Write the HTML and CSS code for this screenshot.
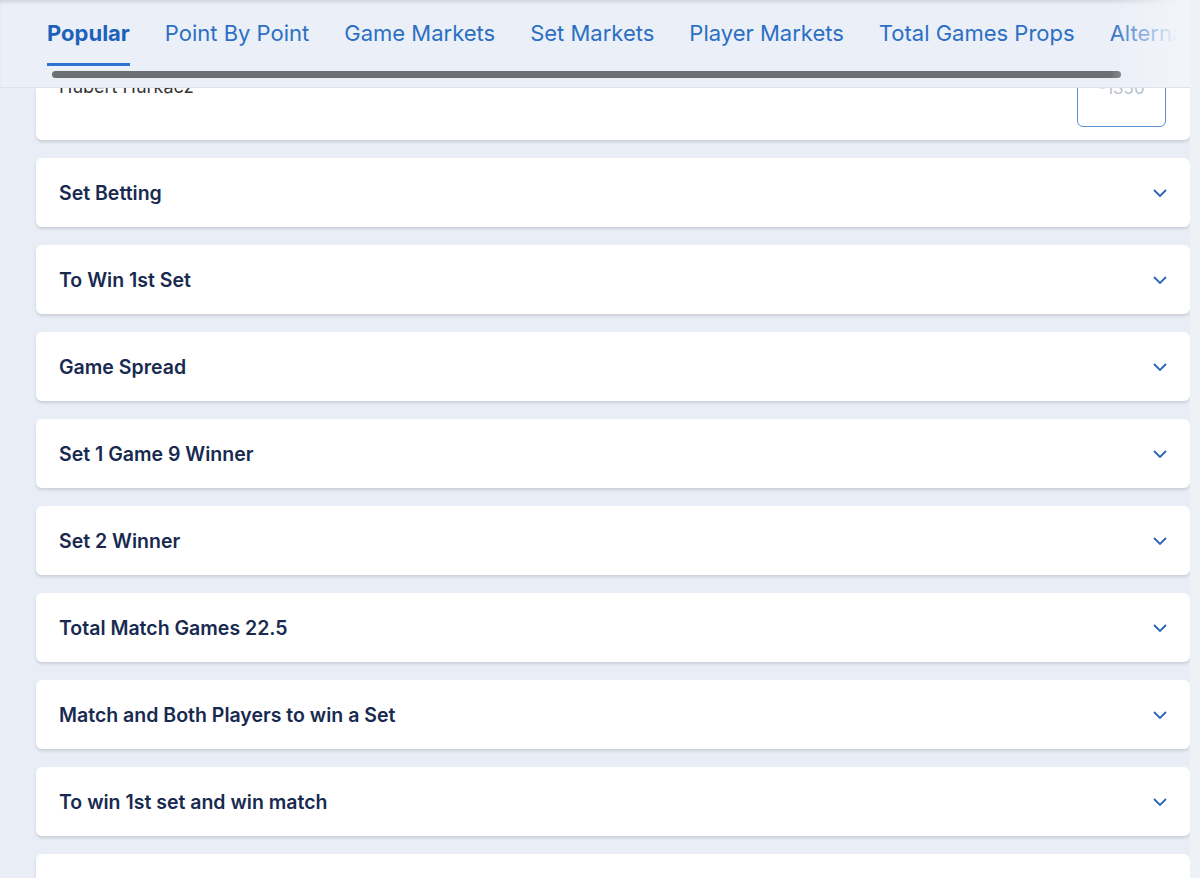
FILE: index.html
```html
<!DOCTYPE html>
<html lang="en">
<head>
    <meta charset="UTF-8">
    <meta name="viewport" content="width=device-width, initial-scale=1.0">
    <title>Markets</title>
    <link rel="stylesheet" href="styles.css">
</head>
<body>
    <div class="page">
        <div class="tabs-bar">
            <div class="tabs">
                <div class="tab active">Popular</div>
                <div class="tab">Point By Point</div>
                <div class="tab">Game Markets</div>
                <div class="tab">Set Markets</div>
                <div class="tab">Player Markets</div>
                <div class="tab">Total Games Props</div>
                <div class="tab">Alternative Markets</div>
            </div>
            <div class="scroll-track"><div class="scroll-thumb"></div></div>
            <div class="tabs-fade"></div>
        </div>

        <div class="markets">
            <div class="card card-open">
                <div class="runner">
                    <span class="runner-name">Hubert Hurkacz</span>
                    <button class="odds">-1350</button>
                </div>
            </div>
            <div class="card"><span>Set Betting</span><svg class="chev" viewBox="0 0 14 8"><path d="M1 1l6 6 6-6"/></svg></div>
            <div class="card"><span>To Win 1st Set</span><svg class="chev" viewBox="0 0 14 8"><path d="M1 1l6 6 6-6"/></svg></div>
            <div class="card"><span>Game Spread</span><svg class="chev" viewBox="0 0 14 8"><path d="M1 1l6 6 6-6"/></svg></div>
            <div class="card"><span>Set 1 Game 9 Winner</span><svg class="chev" viewBox="0 0 14 8"><path d="M1 1l6 6 6-6"/></svg></div>
            <div class="card"><span>Set 2 Winner</span><svg class="chev" viewBox="0 0 14 8"><path d="M1 1l6 6 6-6"/></svg></div>
            <div class="card"><span>Total Match Games 22.5</span><svg class="chev" viewBox="0 0 14 8"><path d="M1 1l6 6 6-6"/></svg></div>
            <div class="card"><span>Match and Both Players to win a Set</span><svg class="chev" viewBox="0 0 14 8"><path d="M1 1l6 6 6-6"/></svg></div>
            <div class="card"><span>To win 1st set and win match</span><svg class="chev" viewBox="0 0 14 8"><path d="M1 1l6 6 6-6"/></svg></div>
            <div class="card"><span>Player to Win a Set</span><svg class="chev" viewBox="0 0 14 8"><path d="M1 1l6 6 6-6"/></svg></div>
        </div>
    </div>
</body>
</html>
```

FILE: styles.css
```css
body {
    margin: 0;
    padding: 0;
    font-family: Inter, Lato, sans-serif;
    background: #eef1f6;
    height: 100vh;
    overflow: hidden;
}

.page {
    width: 1190px;
    height: 100vh;
    display: flex;
    flex-direction: column;
    background: #e9edf5;
}

/* market tabs strip */
.tabs-bar {
    position: relative;
    flex: none;
    height: 88px;
    background: #ebeff7;
    box-shadow: inset 0 4px 4px -2px rgba(0,0,0,0.12);
    border-bottom: 1px solid #dfe4ec;
    box-sizing: border-box;
    overflow: hidden;
    z-index: 2;
}

.tabs {
    display: flex;
    gap: 35px;
    padding: 18px 0 0 47px;
    white-space: nowrap;
}

.tab {
    font-size: 22px;
    color: #2b6fc4;
    padding-bottom: 15px;
    border-bottom: 3px solid transparent;
    line-height: 30px;
}

.tab.active {
    font-weight: 700;
    color: #1c62bb;
    border-bottom-color: #2a74d2;
}

.scroll-track {
    margin: 5px 0 0 52px;
    width: 1069px;
}

.scroll-thumb {
    height: 7px;
    border-radius: 4px;
    background: #6c6f73;
}

.tabs-fade {
    position: absolute;
    top: 0;
    right: 0;
    bottom: 0;
    width: 80px;
    background: linear-gradient(90deg, rgba(240,243,249,0), #f1f4f9 85%);
}

/* market cards */
.markets {
    flex: 1;
    overflow: hidden;
    padding: 0 0 0 36px;
    display: flex;
    flex-direction: column;
    gap: 18px;
}

.card {
    flex: none;
    height: 69px;
    background: white;
    border-radius: 6px;
    box-shadow: 0 2px 3px rgba(40,55,80,0.16);
    display: flex;
    align-items: center;
    justify-content: space-between;
    padding: 0 23px;
    font-size: 19.5px;
    font-weight: 600;
    color: #182a50;
}

.card-open {
    height: 52px;
    align-items: flex-start;
    border-radius: 0 0 6px 6px;
}

.runner {
    width: 100%;
    display: flex;
    justify-content: space-between;
    margin-top: -13px;
}

.runner-name {
    font-size: 18px;
    font-weight: 400;
    color: #333;
    line-height: 24px;
}

.odds {
    width: 89px;
    height: 52px;
    margin-right: 1px;
    background: white;
    border: 1.5px solid #5a8fd8;
    border-radius: 6px;
    font-family: inherit;
    font-size: 17px;
    color: #b8c1d0;
    padding-top: 0;
    line-height: 24px;
    display: flex;
    justify-content: center;
}

.chev {
    width: 14px;
    height: 8px;
    fill: none;
    stroke: #2a64b6;
    stroke-width: 1.8;
}
```
